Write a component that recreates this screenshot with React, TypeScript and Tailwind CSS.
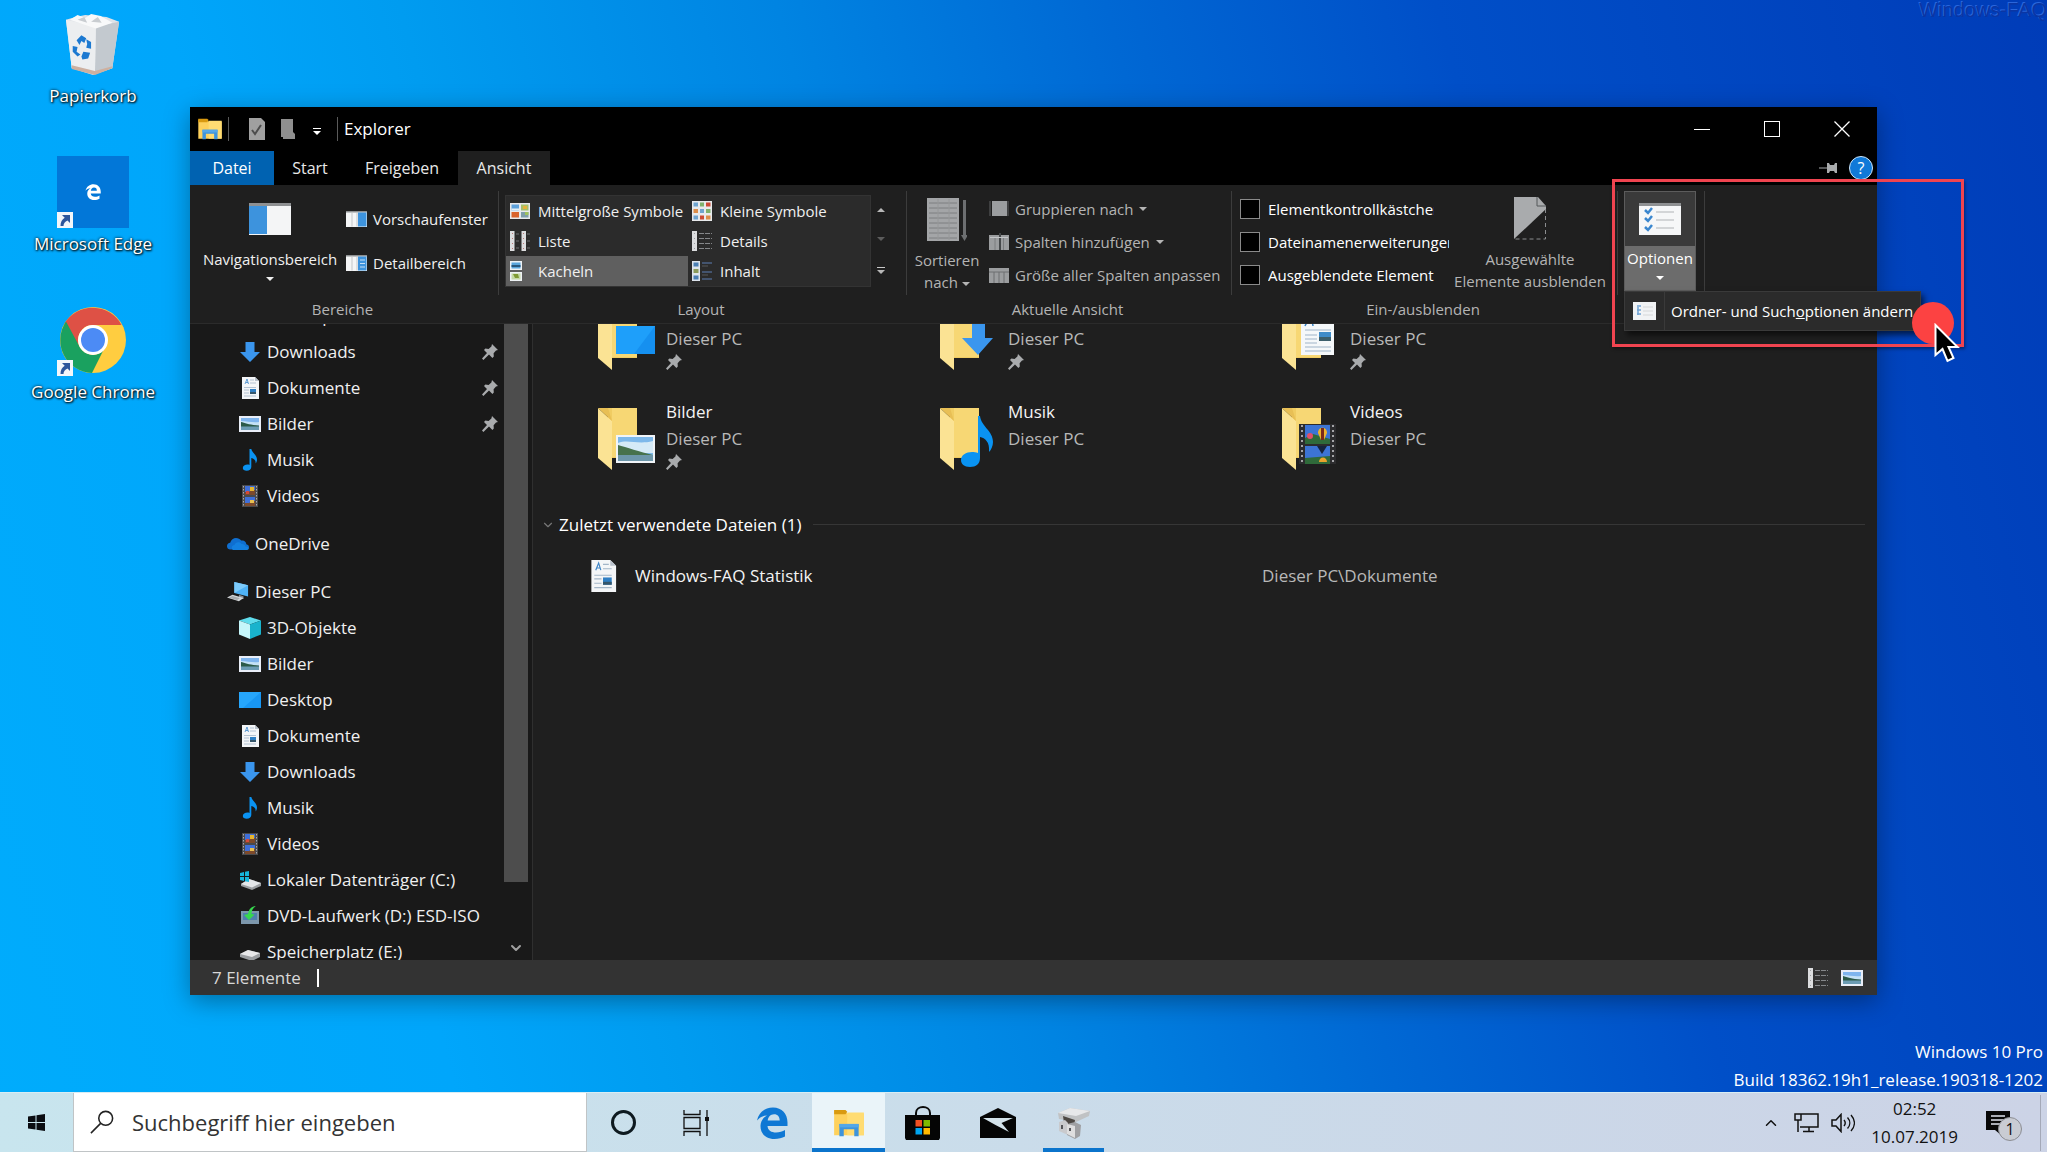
import React from 'react';
import { ChevronDown, ChevronUp } from 'lucide-react';

interface IconProps {
  className?: string;
}

interface TreeItem {
  label: string;
  icon: React.FC<IconProps>;
  pinned?: boolean;
  root?: boolean;
}

interface Tile {
  name: string;
  badge: React.ReactNode;
  pinned?: boolean;
}

/* ---------- Small icons ---------- */

const Pin: React.FC<IconProps> = ({ className }) => (
  <svg viewBox="0 0 16 16" className={className} aria-hidden="true">
    <path d="M10 0l6 6-2 .6-2.4 2.6.2 3.4-1.4 1.4-3.4-3.4L1.4 16 0 14.6l5-5.6-3-3L3.400 4.600l3.200.400L9.400 2.400z" fill="#a9abad" />
  </svg>
);

const Caret: React.FC<IconProps> = ({ className }) => (
  <svg viewBox="0 0 8 4" className={className} aria-hidden="true">
    <path d="M0 0h8L4 4z" fill="currentColor" />
  </svg>
);

const DownloadIcon: React.FC<IconProps> = ({ className }) => (
  <svg viewBox="0 0 22 22" className={className} aria-hidden="true">
    <path d="M6.500 1h9v10H21l-10 10L1 11h5.500z" fill="#3a96ee" />
  </svg>
);

const DocumentIcon: React.FC<IconProps> = ({ className }) => (
  <svg viewBox="0 0 22 22" className={className} aria-hidden="true">
    <path d="M3 0h13l4 4v18H3z" fill="#f4f6f8" />
    <path d="M16 0l4 4h-4z" fill="#b9c2cc" />
    <path d="M6 7l2-5 1.500 5M7 5.500h2" stroke="#3f86c8" strokeWidth=".8" fill="none" />
    <path d="M11 3h4M11 6h6M5 10.500h12M5 13h5M5 16h5M5 19h12" stroke="#a3b6c8" strokeWidth=".8" />
    <path d="M11 12h6v5h-6z" fill="#2f7fc4" />
    <path d="M11 15h6v2h-6z" fill="#35566b" />
  </svg>
);

const PictureIcon: React.FC<IconProps> = ({ className }) => (
  <svg viewBox="0 0 22 22" className={className} aria-hidden="true">
    <path d="M0 3h22v16H0z" fill="#e9eef8" />
    <path d="M2 5h18v12H2z" fill="#7fb5ee" />
    <path d="M2 8c6 0 12 2 18 1v4H2z" fill="#c4e1f6" />
    <path d="M2 9c4 1 9 3 18 3.500V14H2z" fill="#2c5a48" />
    <path d="M2 13.500h18V17H2z" fill="#6c9cb4" />
  </svg>
);

const MusicIcon: React.FC<IconProps> = ({ className }) => (
  <svg viewBox="0 0 22 22" className={className} aria-hidden="true">
    <path d="M10.500 0h1.800c.4 3.600 5.700 6 5.700 10.500 0 1.800-.6 3-1.400 4 .4-3.600-1.800-5-4.300-5.500V18c0 2.200-2 3.700-4.600 3.700-2.300 0-3.900-1.100-3.900-2.800 0-2 2.200-3.400 4.700-3.400.8 0 1.500.1 2 .4z" fill="#0a93f2" />
  </svg>
);

const VideoIcon: React.FC<IconProps> = ({ className }) => (
  <svg viewBox="0 0 22 22" className={className} aria-hidden="true">
    <path d="M3 0h16v22H3z" fill="#4a4a4c" />
    <path d="M6 1h10v9H6zM6 12h10v9H6z" fill="#3f6fd8" />
    <path d="M6 7h4l2-2h4v5H6zM6 18h4l3-2h3v5H6z" fill="#7d4a2c" />
    <path d="M11 2h4v4h-4z" fill="#e6b52e" />
    <path d="M7 6h3v3H7z" fill="#d44a3a" />
    <path d="M11 15h4v3h-4z" fill="#e6c052" />
    <path d="M4.500 1v20M17.500 1v20" stroke="#a8a8b0" strokeDasharray="1.500 1.500" />
  </svg>
);

const OneDriveIcon: React.FC<IconProps> = ({ className }) => (
  <svg viewBox="0 0 22 22" className={className} aria-hidden="true">
    <path d="M3 16.500C.5 16 0 14.500 0 13c0-2 1.500-3.200 3.200-3.300C4 6.800 6.500 5 9 5c2.200 0 4 .9 5.200 2.600 3-.7 5 1.300 5.100 3.600 1.800.3 2.700 1.500 2.700 2.900 0 1.600-1 2.500-2.500 2.500z" fill="#0f6fd0" />
    <path d="M6 17c-2-1-1.500-4.800 1.500-5 1-3.400 5.500-3.600 7-1 1.500-.4 3.500.5 4 2.500 4 0 4 3.500 1.500 3.500z" fill="#1380e0" />
  </svg>
);

const ComputerIcon: React.FC<IconProps> = ({ className }) => (
  <svg viewBox="0 0 24 22" className={className} aria-hidden="true">
    <path d="M8 0l15 3.500v12.500L8 12z" fill="#4fb2f5" />
    <path d="M23 3.500L8 12V0z" fill="#7ccbfb" />
    <path d="M13 14l5 1.500v3H13z" fill="#8a8f94" />
    <path d="M0 17l6-3 12 3.500-5 3.500z" fill="#d3d6d8" />
    <path d="M2 17.200l4-1.800 8 2.500-3 1.800z" fill="#a7abae" />
  </svg>
);

const CubeIcon: React.FC<IconProps> = ({ className }) => (
  <svg viewBox="0 0 22 22" className={className} aria-hidden="true">
    <path d="M0 3.500L11 0l11 3.500-11 4z" fill="#5fdcec" />
    <path d="M0 3.500l11 4V22L0 17.500z" fill="#c5f6fa" />
    <path d="M22 3.500l-11 4V22l11-4.500z" fill="#19b3cd" />
  </svg>
);

const DesktopIcon: React.FC<IconProps> = ({ className }) => (
  <svg viewBox="0 0 22 22" className={className} aria-hidden="true">
    <path d="M0 3h22v16H0z" fill="#1897f4" />
    <path d="M0 3h22L4 19H0z" fill="#26a6fc" />
  </svg>
);

const WindowsDriveIcon: React.FC<IconProps> = ({ className }) => (
  <svg viewBox="0 0 22 22" className={className} aria-hidden="true">
    <path d="M2 15l8-5 12 4v3l-9 4-11-4z" fill="#9b9ea1" />
    <path d="M2 15l8-5 12 4-9 4.500z" fill="#e4e6e8" />
    <path d="M1 4l4-1v4H1zM6 2.800L10 2v5H6zM1 8h4v4l-4-1zM6 8h4v5l-4-.8z" fill="#17b6dc" />
  </svg>
);

const DvdIcon: React.FC<IconProps> = ({ className }) => (
  <svg viewBox="0 0 22 22" className={className} aria-hidden="true">
    <path d="M2 6h18v13H2z" fill="#7d97ac" />
    <path d="M4 8h14v7H4z" fill="#4f7fae" />
    <path d="M5 10l4-1c.8-4.500 3-7.500 8-8-3.500 2-4.500 5-4.500 8l3 .6L10 15z" fill="#36d84e" />
  </svg>
);

const DriveIcon: React.FC<IconProps> = ({ className }) => (
  <svg viewBox="0 0 22 22" className={className} aria-hidden="true">
    <path d="M1 13l8-4 12 3v4l-8 4-12-4z" fill="#9b9ea1" />
    <path d="M1 13l8-4 12 3-8 4z" fill="#e8e8e9" />
  </svg>
);

const FolderIcon: React.FC<IconProps> = ({ className }) => (
  <svg viewBox="0 0 34 32" className={className} aria-hidden="true">
    <path d="M0 2h12l3 3h19v25H0z" fill="#fed15c" />
    <path d="M0 1h13l2 2-2 3H0z" fill="#d99a10" />
    <path d="M15 4h19v26H15z" fill="#ffdc73" />
    <path d="M6 17h22v14h-5v-8H11v8H6z" fill="#3e94dc" />
    <path d="M6 17h22v4H6z" fill="#54a7e8" />
  </svg>
);

/* ---------- Ribbon icons ---------- */

const PaneIcon: React.FC<{ side: 'left' | 'right' | 'detail'; className?: string }> = ({ side, className }) => (
  <svg viewBox="0 0 42 32" className={className} aria-hidden="true" preserveAspectRatio="none">
    <path d="M0 0h42v32H0z" fill="#f4f5f6" />
    <path d="M0 0h42v3H0z" fill="#8e9092" />
    {side === 'left' && <path d="M0 3h18v28H0z" fill="#3d93dd" />}
    {side !== 'left' && <path d="M24 3h17v28H24z" fill="#3d93dd" />}
    {side !== 'left' && <path d="M12 3v28M22 3v28" stroke="#c3c6c9" strokeWidth="2" />}
    {side === 'detail' && <path d="M28 10h10M28 17h10M28 24h10" stroke="#c6e0f6" strokeWidth="2" />}
  </svg>
);

const MediumIconsIcon: React.FC<IconProps> = ({ className }) => (
  <svg viewBox="0 0 20 20" className={className} aria-hidden="true">
    <path d="M0 2h20v16H0z" fill="#e8eaec" />
    <path d="M1.500 3.500h7.500v6H1.500z" fill="#5ea2dc" />
    <path d="M1.500 7.500h7.500v2H1.500z" fill="#e4f1f7" />
    <path d="M11 3.500h7.500v6H11z" fill="#a3bf6a" />
    <path d="M13 5h4v3h-4z" fill="#e5b23c" />
    <path d="M1.500 11h7.500v5.500H1.500z" fill="#d9642c" />
    <path d="M11 11h7.500v5.500H11z" fill="#7f9ea8" />
    <path d="M15 11h3.500v3H15z" fill="#9fc25c" />
  </svg>
);

const SmallIconsIcon: React.FC<IconProps> = ({ className }) => (
  <svg viewBox="0 0 20 20" className={className} aria-hidden="true">
    <path d="M0 0h20v20H0z" fill="#e8eaec" />
    <path d="M1.500 1.500h4.500v4H1.500zM8 8h4v4H8zM1.500 14.500h4.500v4H1.500z" fill="#6fa4cf" />
    <path d="M14 1.500h4.500v4H14zM8 14.500h4v4H8z" fill="#cc4a35" />
    <path d="M8 1.500h4v4H8zM14 8h4.500v4H14z" fill="#7fb26c" />
    <path d="M1.500 8h4.500v4H1.500zM14 14.500h4.500v4H14z" fill="#dc8d4a" />
  </svg>
);

const ListIcon: React.FC<IconProps> = ({ className }) => (
  <svg viewBox="0 0 20 20" className={className} aria-hidden="true">
    <path d="M0 0h4.500v20H0zM11.500 0h4.500v20h-4.500z" fill="#dcdddf" />
    <path d="M2.500 2v16M13.500 2v16" stroke="#b0605c" strokeWidth=".8" strokeDasharray="1 4" />
    <path d="M6 3h3M6 10h3M6 17h3M17 3h3M17 10h3M17 17h3" stroke="#6d6f71" />
  </svg>
);

const DetailsIcon: React.FC<IconProps> = ({ className }) => (
  <svg viewBox="0 0 20 20" className={className} aria-hidden="true">
    <path d="M0 0h5v20H0z" fill="#dcdddf" />
    <path d="M2.500 2v16" stroke="#8c8e90" strokeWidth=".8" strokeDasharray="1 4" />
    <path d="M7 2.500h13M7 7.500h13M7 12.500h13M7 17.500h13" stroke="#85878a" strokeDasharray="5 1" />
  </svg>
);

const TilesIcon: React.FC<IconProps> = ({ className }) => (
  <svg viewBox="0 0 20 20" className={className} aria-hidden="true">
    <path d="M0 0h12v9H0zM0 11h12v9H0z" fill="#eef2f5" />
    <path d="M1.500 1.500h9v6h-9z" fill="#58a5dc" />
    <path d="M1.500 4h9v2h-9z" fill="#28577c" />
    <path d="M1.500 12.500h9v6h-9z" fill="#c4d9a4" />
    <path d="M3 13h5l1 4H5z" fill="#7f9a34" />
  </svg>
);

const ContentIcon: React.FC<IconProps> = ({ className }) => (
  <svg viewBox="0 0 20 20" className={className} aria-hidden="true">
    <path d="M0 0h8v20H0z" fill="#dde4ec" />
    <path d="M1.500 1.500h5v4h-5zM1.500 14.500h5v4h-5z" fill="#4a7fb4" />
    <path d="M1.500 8h5v4h-5z" fill="#8a9a5a" />
    <path d="M10 2h10M10 11h10M10 18h10" stroke="#5d7fb4" />
    <path d="M10 5h6M10 14h6" stroke="#56585b" />
  </svg>
);

const SortIcon: React.FC<IconProps> = ({ className }) => (
  <svg viewBox="0 0 40 44" className={className} aria-hidden="true">
    <path d="M0 1h32v43H0z" fill="#a3a5a7" />
    <path d="M2 6h28M2 11h28M2 16h28M2 21h28M2 26h28M2 31h28M2 36h28M2 41h28" stroke="#7c7e80" />
    <path d="M11 2v41M22 2v41" stroke="#969899" />
    <path d="M36 3h3v36h-3z" fill="#6d6f71" />
    <path d="M34 38h7l-3.500 6z" fill="#6d6f71" />
  </svg>
);

const GroupIcon: React.FC<IconProps> = ({ className }) => (
  <svg viewBox="0 0 20 20" className={className} aria-hidden="true">
    <path d="M3 2h15v15H3z" fill="#9b9d9f" />
    <path d="M1 2v15M19 2v15" stroke="#5f6163" />
  </svg>
);

const ColumnsIcon: React.FC<IconProps> = ({ className }) => (
  <svg viewBox="0 0 20 20" className={className} aria-hidden="true">
    <path d="M0 3h20v15H0z" fill="#9b9d9f" />
    <path d="M6 5v13M14.500 5v13" stroke="#7b7d7f" />
    <path d="M11 1v17" stroke="#45484a" strokeWidth="2" />
    <path d="M1 5.500h18" stroke="#c4c6c8" />
  </svg>
);

const FitColumnsIcon: React.FC<IconProps> = ({ className }) => (
  <svg viewBox="0 0 20 20" className={className} aria-hidden="true">
    <path d="M0 3h20v15H0z" fill="#9b9d9f" />
    <path d="M5 7v11M10 7v11M15 7v11M0 7h20" stroke="#6d6f71" />
  </svg>
);

const HideIcon: React.FC<IconProps> = ({ className }) => (
  <svg viewBox="0 0 32 43" className={className} aria-hidden="true">
    <path d="M0 0h24l8 9v3L0 42z" fill="#a9abad" />
    <path d="M23 0v9h9" fill="none" stroke="#55585a" />
    <path d="M31.500 12v30H0" fill="none" stroke="#8b8d8f" strokeDasharray="4 3" />
  </svg>
);

const OptionsIcon: React.FC<IconProps> = ({ className }) => (
  <svg viewBox="0 0 42 32" className={className} aria-hidden="true">
    <path d="M0 0h42v32H0z" fill="#f6f7f8" />
    <path d="M0 0h42v3H0z" fill="#8e9092" />
    <path d="M6 7l3 3 4-5M6 15l3 3 4-5M6 24l3 3 4-5" stroke="#3b87cf" strokeWidth="2.500" fill="none" />
    <path d="M17 9h18M17 17h18M17 25h18" stroke="#c8cacc" strokeWidth="1.500" />
  </svg>
);

const SmallOptionsIcon: React.FC<IconProps> = ({ className }) => (
  <svg viewBox="0 0 23 18" className={className} aria-hidden="true">
    <path d="M0 0h23v18H0z" fill="#f1f3f5" />
    <path d="M4 4h4M4 8h4M4 12h4M5 5v8" stroke="#6fa3d4" strokeWidth="1.500" />
    <path d="M10 5h10M10 9h10M10 13h10" stroke="#d5d7d9" />
  </svg>
);

/* ---------- Taskbar icons ---------- */

const EdgeIcon: React.FC<IconProps> = ({ className }) => (
  <svg viewBox="0 0 32 32" className={className} aria-hidden="true">
    <path d="M1 13.500C3 5 9.500.5 17 .5 26 .5 31.500 7 31.500 15.500V19H11.500c.3 4.500 4 6.500 8.500 6.500 3.500 0 6.500-1 9-2.500v6.500c-3 1.600-6.500 2.500-10.500 2.500C10 32 4.500 27 4.500 19c0-4.500 2.500-8.500 6.500-10.500C6.500 8.700 3 11 1 13.500zM11.700 13.500h12c0-3.800-1.800-6.300-5.700-6.300-3.600 0-5.800 2.800-6.300 6.300z" fill="currentColor" />
  </svg>
);

const StoreIcon: React.FC<IconProps> = ({ className }) => (
  <svg viewBox="0 0 35 34" className={className} aria-hidden="true">
    <path d="M11 10V7c0-8 14-8 14 0v3" fill="none" stroke="#0a0a0a" strokeWidth="2" />
    <path d="M0 9h35v23l-1 2H1l-1-2z" fill="#050505" />
    <path d="M10.500 14h6.500v6.500h-6.500z" fill="#f25022" />
    <path d="M18.500 14H25v6.500h-6.500z" fill="#7fba00" />
    <path d="M10.500 22h6.500v6.500h-6.500z" fill="#00a4ef" />
    <path d="M18.500 22H25v6.500h-6.500z" fill="#ffb900" />
  </svg>
);

const MailIcon: React.FC<IconProps> = ({ className }) => (
  <svg viewBox="0 0 36 30" className={className} aria-hidden="true">
    <path d="M0 9L18 0l18 9v21H0z" fill="#050505" />
    <path d="M3 10h30l-11.500 5L29 24 15.500 17z" fill="#d3e2ea" />
  </svg>
);

const ToolIcon: React.FC<IconProps> = ({ className }) => (
  <svg viewBox="0 0 32 32" className={className} aria-hidden="true">
    <path d="M0 6l12-5 20 3-1 5-13 6L1 12z" fill="#c0c2c4" />
    <path d="M0 6l12-5 20 3-14 5z" fill="#e7e8ea" />
    <path d="M5 9l12 4-1 6-10-3z" fill="#4d4844" />
    <path d="M1 15l6-2 3 3v12l-9-4z" fill="#c9cacd" />
    <path d="M9 17l8-2 6 3-1 11-5 3-8-4z" fill="#9fa0a3" />
    <path d="M9 17l8 2v12l-8-4z" fill="#dededf" />
    <path d="M4 18v4M12 21v3" stroke="#55565a" strokeWidth="2" />
  </svg>
);

const ShortcutArrow = () => (
  <svg viewBox="0 0 16 16" className="absolute bottom-0 left-0 size-4" aria-hidden="true">
    <path d="M0 0h16v16H0z" fill="#f3f6fa" />
    <path d="M5 3h8v8l-2.500-2.500C8 9.500 6.500 11.500 6.500 14H3.500c0-4 1.500-6.500 4.200-8.300z" fill="#2e569c" />
  </svg>
);

/* ---------- Desktop ---------- */

const DesktopShortcut: React.FC<{ label: string; shortcut?: boolean; children: React.ReactNode }> = ({
  label,
  shortcut,
  children,
}) => (
  <button className="flex h-37 w-full flex-col items-center">
    <span className="relative flex size-18 items-center justify-center">
      {children}
      {shortcut && <ShortcutArrow />}
    </span>
    <span className="mt-1 whitespace-nowrap text-[17px] leading-6 text-white [text-shadow:1px_1px_2px_#000,0_0_3px_#000]">
      {label}
    </span>
  </button>
);

const DesktopShortcuts = () => (
  <div className="flex w-[186px] flex-col pt-2">
    <DesktopShortcut label="Papierkorb">
      <svg viewBox="0 0 58 64" className="h-16 w-14" aria-hidden="true">
        <path d="M1 7l10-3 10-2 10 1 12 1 13 5-7 48-20 7L7 57z" fill="#dfe3e8" />
        <path d="M32 14l24-5-7 48-18 6z" fill="#c3c9cf" />
        <path d="M1 7l31 7-1 49L7 57z" fill="#eceef0" />
        <path d="M5 7l8-5 8 3 6-4 10 2 12 7-17 6z" fill="#f8f9fa" />
        <path d="M13 7l7-3 3 6zM27 9l7-5 4 6z" fill="#c9cdd1" />
        <path d="M7 54l24 6 18-5v2l-18 7-24-6z" fill="#cdb0a0" />
        <path d="M12 28l5-5 5 3-2 5-3-2-2 4zM22 27l5 3 0 7-5-1 1-4zM8 34l5 1-1 5 4 3-3 2-5-5zM17 45l2-5 7 1-2 6-6 1z" fill="#1c79d1" />
      </svg>
    </DesktopShortcut>
    <DesktopShortcut label="Microsoft Edge" shortcut>
      <span className="flex size-18 items-center justify-center bg-[#0277d8] text-white">
        <EdgeIcon className="size-4" />
      </span>
    </DesktopShortcut>
    <DesktopShortcut label="Google Chrome" shortcut>
      <svg viewBox="0 0 66 66" className="size-[66px]" aria-hidden="true">
        <circle cx="33" cy="33" r="33" fill="#ffcd40" />
        <path d="M4.400 16.500A33 33 0 0 1 61.600 18H33a15 15 0 0 0-13 22.500z" fill="#de5145" />
        <path d="M6 14.500L20 40.500A15 15 0 0 0 43 44L32 66A33 33 0 0 1 6 14.500z" fill="#1aa15f" />
        <circle cx="33" cy="33" r="15" fill="#fff" />
        <circle cx="33" cy="33" r="12" fill="#4c8bf5" />
      </svg>
    </DesktopShortcut>
  </div>
);

/* ---------- Explorer: title and tabs ---------- */

const TitleBar = () => (
  <header className="flex h-11 items-center bg-black pl-2">
    <FolderIcon className="h-[22px] w-6" />
    <span className="ml-1.5 h-6 w-px bg-[#5a5a5a]" />
    <button aria-label="Eigenschaften" className="ml-5">
      <svg viewBox="0 0 16 22" className="h-[22px] w-4" aria-hidden="true">
        <path d="M0 0h12l4 4v18H0z" fill="#a0a0a0" />
        <path d="M3 12l3 4 6-9" stroke="#4d4d4d" strokeWidth="2" fill="none" />
      </svg>
    </button>
    <button aria-label="Neuer Ordner" className="ml-4">
      <svg viewBox="0 0 14 20" className="h-5 w-3.5" aria-hidden="true">
        <path d="M0 0h12v13l2 2v5H2V18H0z" fill="#8f8f8f" />
      </svg>
    </button>
    <button aria-label="Symbolleiste anpassen" className="ml-3 flex w-5 flex-col items-center gap-0.5 pt-1 text-white">
      <span className="h-px w-2 bg-white" />
      <Caret className="h-1 w-2" />
    </button>
    <span className="ml-2.5 h-6 w-px bg-[#5a5a5a]" />
    <h1 className="ml-1.5 text-[17px] text-white">Explorer</h1>
    <div className="ml-auto flex h-full">
      <button aria-label="Minimieren" className="flex w-[70px] items-center justify-center">
        <span className="h-px w-4 bg-white" />
      </button>
      <button aria-label="Maximieren" className="flex w-[70px] items-center justify-center">
        <span className="size-4 border border-white" />
      </button>
      <button aria-label="Schließen" className="flex w-[70px] items-center justify-center">
        <svg viewBox="0 0 16 16" className="size-4" aria-hidden="true">
          <path d="M.5.5l15 15M15.500.5l-15 15" stroke="#fff" strokeWidth="1.300" />
        </svg>
      </button>
    </div>
  </header>
);

const Tabs = () => (
  <nav className="flex h-[34px] items-stretch bg-black text-base text-[#e8e8e8]">
    <button className="w-21 bg-[#0062b1] text-white">Datei</button>
    <button className="w-18">Start</button>
    <button className="w-28">Freigeben</button>
    <button className="w-23 bg-[#1f1f1f]">Ansicht</button>
    <div className="ml-auto flex items-center gap-2.5 pr-1">
      <button aria-label="Menüband anheften">
        <svg viewBox="0 0 20 12" className="h-3 w-5" aria-hidden="true">
          <path d="M0 5.500h8V1h2l1 2h4l1-2h2v10h-2l-1-2h-4l-1 2H8V6.500H0z" fill="#a9abad" />
        </svg>
      </button>
      <button
        aria-label="Hilfe"
        className="flex size-6 items-center justify-center rounded-full border border-[#cde6fa] bg-[#1079d8] text-base leading-none text-white"
      >
        ?
      </button>
    </div>
  </nav>
);

/* ---------- Explorer: ribbon ---------- */

const RibbonGroup: React.FC<{ title?: string; className: string; children: React.ReactNode }> = ({
  title,
  className,
  children,
}) => (
  <section className={`flex shrink-0 flex-col ${className}`}>
    <div className="mt-1.5 flex h-26 border-r border-[#3c3c3c] pt-1">{children}</div>
    <h2 className="mt-0.5 pr-1 text-center leading-6 text-[#b4b4b4]">{title}</h2>
  </section>
);

const layouts = [
  { label: 'Mittelgroße Symbole', icon: MediumIconsIcon },
  { label: 'Kleine Symbole', icon: SmallIconsIcon },
  { label: 'Liste', icon: ListIcon },
  { label: 'Details', icon: DetailsIcon },
  { label: 'Kacheln', icon: TilesIcon, active: true },
  { label: 'Inhalt', icon: ContentIcon },
];

const toggles = [
  { id: 'boxes', label: 'Elementkontrollkästchen', width: 'w-[166px]' },
  { id: 'extensions', label: 'Dateinamenerweiterungen', width: 'w-[181px]' },
  { id: 'hidden', label: 'Ausgeblendete Elemente', width: 'w-[166px]' },
];

const Ribbon = () => (
  <div className="relative z-10 flex h-[139px] shrink-0 border-b border-[#2b2b2b] bg-[#1f1f1f] text-[15px] text-[#f0f0f0]">
    <RibbonGroup title="Bereiche" className="w-[309px]">
      <button className="ml-2.5 flex w-35 flex-col items-center pt-2">
        <PaneIcon side="left" className="h-8 w-[42px]" />
        <span className="mt-3 leading-6">Navigationsbereich</span>
        <Caret className="mt-1.5 h-1 w-2" />
      </button>
      <div className="ml-1.5 flex flex-col gap-5 pt-3">
        <button className="flex items-center gap-1.5 leading-6">
          <PaneIcon side="right" className="h-4 w-[21px]" />
          Vorschaufenster
        </button>
        <button className="flex items-center gap-1.5 leading-6">
          <PaneIcon side="detail" className="h-4 w-[21px]" />
          Detailbereich
        </button>
      </div>
    </RibbonGroup>

    <RibbonGroup title="Layout" className="w-[408px]">
      <div className="ml-1.5 grid h-[92px] w-[366px] grid-cols-2 grid-rows-3 border border-[#333] bg-[#2b2b2b]">
        {layouts.map(({ label, icon: Icon, active }) => (
          <button
            key={label}
            className={`flex items-center gap-2 whitespace-nowrap pl-1 ${active ? 'bg-[#5f5f5f]' : ''}`}
          >
            <Icon className="size-5 shrink-0" />
            {label}
          </button>
        ))}
      </div>
      <div className="flex h-[92px] w-5 flex-col items-center justify-around text-[#b8b8b8]">
        <button aria-label="Nach oben">
          <Caret className="h-1 w-2 rotate-180" />
        </button>
        <button aria-label="Nach unten" className="text-[#5c5c5c]">
          <Caret className="h-1 w-2" />
        </button>
        <button aria-label="Mehr" className="flex flex-col items-center gap-0.5">
          <span className="h-px w-2 bg-[#c8c8c8]" />
          <Caret className="h-1 w-2" />
        </button>
      </div>
    </RibbonGroup>

    <RibbonGroup title="Aktuelle Ansicht" className="w-[325px] text-[#b4b4b4]">
      <button className="flex w-20 flex-col items-center">
        <SortIcon className="mt-0.5 h-11 w-10" />
        <span className="mt-2 leading-[22px]">
          Sortieren
          <br />
          nach <Caret className="inline h-1 w-2 align-middle" />
        </span>
      </button>
      <div className="ml-0.5 flex flex-col gap-[9px] whitespace-nowrap pt-0.5">
        <button className="flex items-center gap-1.5 leading-6">
          <GroupIcon className="size-5" />
          Gruppieren nach
          <Caret className="h-1 w-2" />
        </button>
        <button className="flex items-center gap-1.5 leading-6">
          <ColumnsIcon className="size-5" />
          Spalten hinzufügen
          <Caret className="h-1 w-2" />
        </button>
        <button className="flex items-center gap-1.5 leading-6">
          <FitColumnsIcon className="size-5" />
          Größe aller Spalten anpassen
        </button>
      </div>
    </RibbonGroup>

    <RibbonGroup title="Ein-/ausblenden" className="w-[386px]">
      <div className="ml-2 flex w-[210px] flex-col gap-[9px] whitespace-nowrap pt-0.5">
        {toggles.map((toggle) => (
          <label key={toggle.id} htmlFor={toggle.id} className="flex items-center gap-2 leading-6">
            <input id={toggle.id} type="checkbox" className="size-5 shrink-0 appearance-none border border-[#8a8a8a] bg-black" />
            <span className={`overflow-hidden text-white ${toggle.width}`}>{toggle.label}</span>
          </label>
        ))}
      </div>
      <button className="flex w-40 flex-col items-center whitespace-nowrap text-[#b4b4b4]">
        <HideIcon className="mt-0.5 h-[43px] w-8" />
        <span className="mt-2 leading-[22px]">
          Ausgewählte
          <br />
          Elemente ausblenden
        </span>
      </button>
    </RibbonGroup>

    <RibbonGroup className="w-[87px]">
      <div className="relative -mt-1 ml-1.5 self-start">
        <button className="flex w-18 flex-col border border-[#5c5c5c]" aria-haspopup="menu" aria-expanded="true">
          <span className="flex h-[54px] items-center justify-center bg-[#3a3a3a]">
            <OptionsIcon className="h-8 w-[42px]" />
          </span>
          <span className="flex h-11 flex-col items-center bg-[#6c6c6c] text-white">
            <span className="leading-6">Optionen</span>
            <Caret className="mt-1.5 h-1 w-2" />
          </span>
        </button>
        <div
          role="menu"
          className="absolute left-0 top-full flex h-10 w-[297px] items-center border border-[#3a3a3a] bg-[#2b2b2b] shadow-[3px_4px_6px_rgba(0,0,0,0.6)]"
        >
          <span className="flex h-full w-10 items-center justify-center border-r border-[#3a3a3a]">
            <SmallOptionsIcon className="h-[18px] w-[23px]" />
          </span>
          <button role="menuitem" className="ml-1.5 whitespace-nowrap text-white">
            Ordner- und Such<u>o</u>ptionen ändern
          </button>
        </div>
      </div>
    </RibbonGroup>
  </div>
);

/* ---------- Explorer: navigation ---------- */

const tree: TreeItem[] = [
  { label: 'Desktop', icon: DesktopIcon, pinned: true },
  { label: 'Downloads', icon: DownloadIcon, pinned: true },
  { label: 'Dokumente', icon: DocumentIcon, pinned: true },
  { label: 'Bilder', icon: PictureIcon, pinned: true },
  { label: 'Musik', icon: MusicIcon },
  { label: 'Videos', icon: VideoIcon },
  { label: 'OneDrive', icon: OneDriveIcon, root: true },
  { label: 'Dieser PC', icon: ComputerIcon, root: true },
  { label: '3D-Objekte', icon: CubeIcon },
  { label: 'Bilder', icon: PictureIcon },
  { label: 'Desktop', icon: DesktopIcon },
  { label: 'Dokumente', icon: DocumentIcon },
  { label: 'Downloads', icon: DownloadIcon },
  { label: 'Musik', icon: MusicIcon },
  { label: 'Videos', icon: VideoIcon },
  { label: 'Lokaler Datenträger (C:)', icon: WindowsDriveIcon },
  { label: 'DVD-Laufwerk (D:) ESD-ISO', icon: DvdIcon },
  { label: 'Speicherplatz (E:)', icon: DriveIcon },
];

const NavigationPane = () => (
  <aside className="flex w-[343px] shrink-0 overflow-hidden border-r border-[#2f2f2f] bg-[#191919]">
    <ul className="-mt-[26px] flex-1">
      {tree.map(({ label, icon: Icon, pinned, root }, index) => (
        <li key={index} className={root ? 'mt-3' : ''}>
          <button
            className={`flex h-9 w-full items-center gap-1.5 whitespace-nowrap pr-1.5 text-[17px] text-[#f0f0f0] ${root ? 'pl-[37px]' : 'pl-[49px]'}`}
          >
            <Icon className="size-[22px] shrink-0" />
            {label}
            {pinned && <Pin className="ml-auto size-4" />}
          </button>
        </li>
      ))}
    </ul>
    <div className="mr-1 flex w-6 flex-col items-center">
      <div className="w-6 flex-1 bg-[#4d4d4d]" />
      <div className="flex h-[78px] items-end pb-1">
        <button aria-label="Nach unten blättern">
          <ChevronDown className="size-4 text-[#a0a0a0]" strokeWidth={3} />
        </button>
      </div>
    </div>
  </aside>
);

/* ---------- Explorer: content ---------- */

const tiles: Tile[] = [
  {
    name: 'Desktop',
    pinned: true,
    badge: (
      <>
        <path d="M18 20h39v28H18z" fill="#1590f0" />
        <path d="M18 20h39L36 48H18z" fill="#1e9ffa" />
      </>
    ),
  },
  {
    name: 'Downloads',
    pinned: true,
    badge: <path d="M32 14h13v18h8L38 49 22 32h10z" fill="#3a96ee" />,
  },
  {
    name: 'Dokumente',
    pinned: true,
    badge: (
      <>
        <path d="M19 5h27l6 8v36H19z" fill="#f5f8fa" />
        <path d="M46 5l6 8h-6z" fill="#b9c2cc" />
        <path d="M23 20l6-12 2 12M25 16h6" stroke="#3a84c6" strokeWidth="1.500" fill="none" />
        <path d="M34 13h12M34 17h14M23 24h26M23 29h12M23 33h12M23 37h12M23 41h26M23 45h26" stroke="#9fb4c8" />
        <path d="M37 26h12v9H37z" fill="#3f8cc9" />
        <path d="M37 31h12v4H37z" fill="#3c5f6c" />
      </>
    ),
  },
  {
    name: 'Bilder',
    pinned: true,
    badge: (
      <>
        <path d="M18 29h39v28H18z" fill="#f0f4f8" />
        <path d="M20 31h35v24H20z" fill="#7db8ea" />
        <path d="M20 37c10-4 20 2 35-2v12H20z" fill="#d5eaf7" />
        <path d="M20 39c8 2 22 7 35 10v1H20z" fill="#47724c" />
        <path d="M20 49h35v6H20z" fill="#6d97aa" />
      </>
    ),
  },
  {
    name: 'Musik',
    badge: (
      <path d="M38 10h2c1 10 13 15 13 26 0 4-2 8-4 10 1-10-4-14-9-15v21c0 6-4 9-10 9s-9-3-9-7c0-5 5-8 11-8 2 0 4 0 6 1z" fill="#0a93f2" />
    ),
  },
  {
    name: 'Videos',
    badge: (
      <>
        <path d="M17 18h37v40H17z" fill="#2c2c2e" />
        <path d="M23 19h25v19H23zM23 40h25v18H23z" fill="#3c74d4" />
        <path d="M23 32l8-4 17 5v5H23zM23 52l25-2v8H23z" fill="#2f6a3a" />
        <path d="M36 27c0-7 9-7 9 0l-3 7h-3z" fill="#eeb42e" />
        <path d="M39 22h3v12h-3z" fill="#7b2a1a" />
        <circle cx="28" cy="30" r="3" fill="#e0506a" />
        <path d="M35 40h10l-5 8z" fill="#16233c" />
        <path d="M37 56c0-6 8-6 8 0z" fill="#e9a32c" />
        <path d="M20 19v38M51 19v38" stroke="#a5a5a8" strokeWidth="2" strokeDasharray="2 3" />
      </>
    ),
  },
];

const Content = () => (
  <main className="flex-1 overflow-hidden bg-[#1f1f1f] text-[17px] text-[#b8b8b8]">
    <div className="-mt-[26px] flex flex-wrap pl-[65px]">
      {tiles.map((tile) => (
        <button key={tile.name} className="flex h-25 w-[342px] items-start text-left">
          <svg viewBox="0 0 58 64" className="mt-2 h-16 w-[58px] shrink-0" aria-hidden="true">
            <path d="M10 2h29v50H10z" fill="#f0cc62" />
            <path d="M14 2h25v49H14z" fill="#f7d774" />
            <path d="M0 2l14 13v49L0 52z" fill="#fbe394" />
            <path d="M0 2h10l4 13z" fill="#e8bf55" />
            {tile.badge}
          </svg>
          <span className="ml-2.5 flex flex-col leading-[27px]">
            <span className="text-[#f4f4f4]">{tile.name}</span>
            <span>Dieser PC</span>
            {tile.pinned && <Pin className="mt-0.5 size-4" />}
          </span>
        </button>
      ))}
    </div>
    <div className="mt-3.5 flex items-center gap-1 pl-2 pr-3">
      <ChevronDown className="size-3.5 text-[#777]" />
      <h2 className="text-white">Zuletzt verwendete Dateien (1)</h2>
      <span className="ml-2 h-px flex-1 bg-[#363636]" />
    </div>
    <button className="mt-[22px] flex w-full items-center pl-[54px] text-left">
      <DocumentIcon className="size-8" />
      <span className="ml-4 w-[627px] text-[#f4f4f4]">Windows-FAQ Statistik</span>
      <span>Dieser PC\Dokumente</span>
    </button>
  </main>
);

const StatusBar = () => (
  <footer className="flex h-[35px] shrink-0 items-center bg-[#333] pl-[22px] pr-3.5 text-[17px] text-[#d8d8d8]">
    <span>7 Elemente</span>
    <span className="ml-4 h-4.5 w-0.5 bg-white" />
    <div className="ml-auto flex items-center gap-3">
      <button aria-label="Details anzeigen">
        <DetailsIcon className="h-5 w-[22px]" />
      </button>
      <button aria-label="Große Miniaturansichten">
        <PictureIcon className="size-[22px]" />
      </button>
    </div>
  </footer>
);

const ExplorerWindow = () => (
  <div className="absolute bottom-[97px] left-[190px] right-[170px] top-[107px] flex flex-col shadow-[0_6px_24px_rgba(0,0,0,0.35)]">
    <TitleBar />
    <Tabs />
    <Ribbon />
    <div className="flex min-h-0 flex-1">
      <NavigationPane />
      <Content />
    </div>
    <StatusBar />
  </div>
);

/* ---------- Taskbar ---------- */

const Taskbar = () => (
  <footer className="flex h-15 shrink-0 items-stretch border-t border-[#d8edf4] bg-linear-to-r from-[#c8e5ee] to-[#ccd3e6] text-[#111]">
    <button aria-label="Start" className="flex w-[73px] items-center justify-center">
      <svg viewBox="0 0 17 17" className="size-[17px]" aria-hidden="true">
        <path d="M0 2.500L7.500 1.400V8H0zM8.500 1.200L17 0v8H8.500zM0 9h7.500v6.600L0 14.500zM8.500 9H17v8l-8.500-1.200z" fill="#0b0d12" />
      </svg>
    </button>
    <div className="flex w-[514px] items-center border-x border-b border-[#c0c4c6] bg-white pl-4">
      <svg viewBox="0 0 26 26" className="size-6" aria-hidden="true">
        <circle cx="17" cy="9" r="7.500" fill="none" stroke="#222" strokeWidth="1.700" />
        <path d="M11.500 14.500L1 25" stroke="#222" strokeWidth="1.700" />
      </svg>
      <input
        type="text"
        aria-label="Suche"
        placeholder="Suchbegriff hier eingeben"
        className="ml-4.5 w-96 text-[22px] outline-none placeholder:text-[#333]"
      />
    </div>
    <button aria-label="Cortana" className="flex w-[73px] items-center justify-center">
      <span className="size-[25px] rounded-full border-3 border-[#0e1a20]" />
    </button>
    <button aria-label="Aktive Anwendungen" className="flex w-18 items-center justify-center">
      <svg viewBox="0 0 26 26" className="size-[26px]" aria-hidden="true">
        <path d="M1 0v4.500h16V0M1 26v-4.500h16V26M1 7.500h16v11H1zM24 0v26" fill="none" stroke="#111" strokeWidth="1.300" />
        <path d="M22 7h4v4h-4z" fill="#111" />
      </svg>
    </button>
    <button aria-label="Edge" className="flex w-20 items-center justify-center text-[#0f78d4]">
      <EdgeIcon className="size-8" />
    </button>
    <button aria-label="Explorer" className="flex w-[73px] items-center justify-center border-b-4 border-[#0b74cc] bg-[#eaf4f9] pt-1">
      <FolderIcon className="h-7 w-8" />
    </button>
    <button aria-label="Store" className="flex w-[75px] items-center justify-center">
      <StoreIcon className="h-[34px] w-[35px]" />
    </button>
    <button aria-label="Mail" className="flex w-[75px] items-center justify-center">
      <MailIcon className="h-[30px] w-9" />
    </button>
    <button aria-label="Setup" className="ml-2 flex w-[61px] items-center justify-center border-b-4 border-[#0b74cc] pt-1">
      <ToolIcon className="size-8" />
    </button>

    <div className="ml-auto flex items-center">
      <button aria-label="Ausgeblendete Symbole">
        <ChevronUp className="size-[18px]" strokeWidth={2} />
      </button>
      <svg viewBox="0 0 25 20" className="ml-3.5 h-5 w-[25px]" aria-hidden="true">
        <path d="M6 1h18v13H6M15 14v4M9 18.500h11M1 1h6v6H1zM4 7v12" fill="none" stroke="#111" strokeWidth="1.500" />
      </svg>
      <svg viewBox="0 0 24 20" className="ml-3 h-5 w-6" aria-hidden="true">
        <path d="M1 7h4l5-5.500v17L5 13H1z" fill="none" stroke="#111" strokeWidth="1.500" />
        <path d="M13 7c1.500 1.800 1.500 4.200 0 6M16.500 4.500c3 3.300 3 7.700 0 11M20 2c4.500 5 4.500 11 0 16" fill="none" stroke="#111" strokeWidth="1.400" />
      </svg>
      <div className="ml-4 flex flex-col items-center text-[17px] leading-7">
        <span>02:52</span>
        <span>10.07.2019</span>
      </div>
      <button aria-label="1 neue Benachrichtigung" className="relative ml-7 size-9">
        <svg viewBox="0 0 24 24" className="size-6" aria-hidden="true">
          <path d="M0 0h24v19h-9v5l-6-5H0z" fill="#080808" />
          <path d="M5 5h14M5 9h14M5 13h10" stroke="#dfe4ee" strokeWidth="1.300" />
        </svg>
        <span className="absolute bottom-0 right-0 flex size-6 items-center justify-center rounded-full border border-[#8b8d93] bg-[#c9ccd3] text-base">
          1
        </span>
      </button>
      <span className="ml-4.5 mr-1.5 h-14 w-px bg-[#a4a9b8]" />
    </div>
  </footer>
);

const App: React.FC = () => (
  <div className="flex h-screen flex-col overflow-hidden bg-[linear-gradient(75deg,#00acfc_0%,#00a6fb_20%,#009cf0_30%,#0084e2_46%,#0068d4_60%,#004fc8_74%,#003cb8_100%)] font-['Open_Sans','Noto_Sans',sans-serif]">
    <div className="relative flex-1">
      <DesktopShortcuts />

      <span className="absolute -top-1 right-0 font-['Liberation_Sans',sans-serif] text-xl leading-7 text-[#0a36a4] [text-shadow:-1px_-1px_0_#2a66dc]">
        Windows-FAQ
      </span>

      <div className="absolute -bottom-0.5 right-1 text-right text-[17px] leading-7 text-white">
        <p>Windows 10 Pro</p>
        <p>Build 18362.19h1_release.190318-1202</p>
      </div>

      <ExplorerWindow />

      {/* Click highlight */}
      <div className="pointer-events-none absolute right-[83px] top-[179px] z-20 h-[168px] w-[352px] border-3 border-[#f04450] shadow-[1px_2px_3px_rgba(0,0,0,0.4)]" />
      <div className="pointer-events-none absolute right-[93px] top-[302px] z-20 size-[42px] rounded-full bg-[#fc4242]" />
      <svg viewBox="0 0 26 40" className="pointer-events-none absolute right-[87px] top-[323px] z-20 h-10 w-[26px]" aria-hidden="true">
        <path d="M1.500 2v30l7-6 5 12 6-3-5-11h9z" fill="#000" stroke="#fff" strokeWidth="2" />
      </svg>
    </div>
    <Taskbar />
  </div>
);

export default App;
